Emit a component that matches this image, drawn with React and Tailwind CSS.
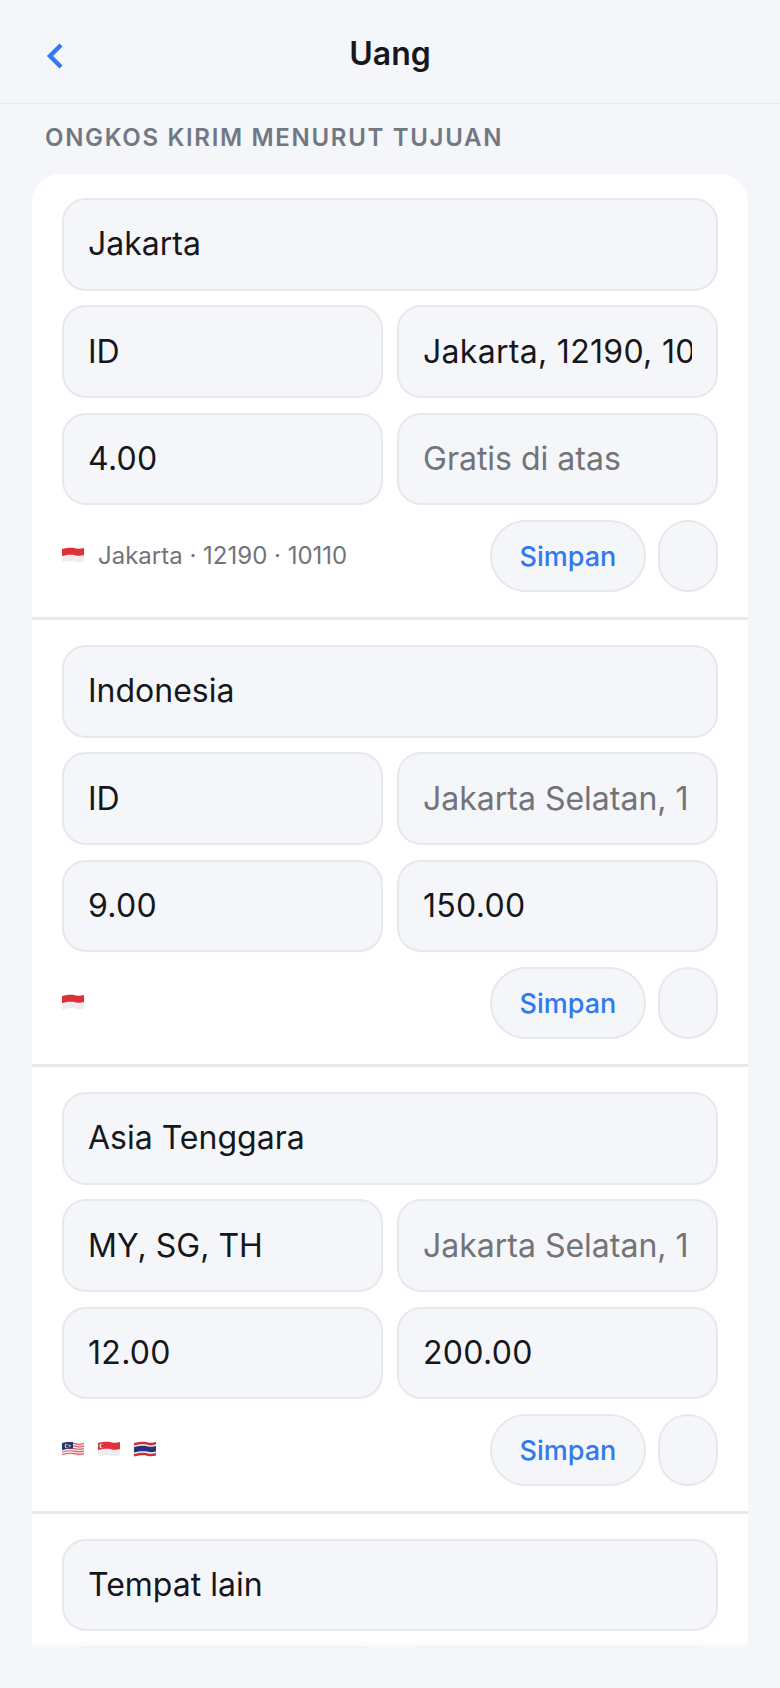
const rows = [
  { name: 'Jakarta', codes: 'ID', area: 'Jakarta, 12190, 10110', areaPh: false, areaNum: true, rate: '4.00', free: 'Gratis di atas', freePh: true, flags: ['id'], note: 'Jakarta · 12190 · 10110' },
  { name: 'Indonesia', codes: 'ID', area: 'Jakarta Selatan, 1', areaPh: true, rate: '9.00', free: '150.00', freePh: false, freeNum: true, flags: ['id'], note: '' },
  { name: 'Asia Tenggara', codes: 'MY, SG, TH', area: 'Jakarta Selatan, 1', areaPh: true, rate: '12.00', free: '200.00', freePh: false, freeNum: true, flags: ['my', 'sg', 'th'], note: '' },
];

const midEdge = 'C19 9 16 9 13 8.2 C10 7.5 6 7.5 0 9 Z';

function Flag({ code }) {
  const wave = 'M0 2 C6 .5 10 .5 13 1.2 C16 2 19 2 22 1 V14.5 C19 15.5 16 15.5 13 14.7 C10 14 6 14 0 15.5 Z';
  const id = `clip-${code}`;
  return (
    <svg width="22" height="17" viewBox="0 0 22 17" className="shrink-0">
      <defs>
        <clipPath id={id}>
          <path d={wave} />
        </clipPath>
      </defs>
      <g clipPath={`url(#${id})`}>
        {code === 'id' && (
          <>
            <rect width="22" height="17" fill="#ededed" />
            <path d={`M0 0 H22 V8 ${midEdge}`} fill="#de3038" />
          </>
        )}
        {code === 'sg' && (
          <>
            <rect width="22" height="17" fill="#ededed" />
            <path d={`M0 0 H22 V8 ${midEdge}`} fill="#e0313c" />
            <circle cx="3.8" cy="5" r="2.3" fill="#fff" />
            <circle cx="4.8" cy="5" r="2.1" fill="#e0313c" />
          </>
        )}
        {code === 'th' && (
          <>
            <rect width="22" height="17" fill="#f3f3f3" />
            <path d="M0 0 H22 V3.6 C19 4.6 16 4.6 13 3.8 C10 3.1 6 3.1 0 4.6 Z" fill="#c8313c" />
            <path d="M0 6 C6 4.5 10 4.5 13 5.2 C16 6 19 6 22 5 V10.4 C19 11.4 16 11.4 13 10.6 C10 9.9 6 9.9 0 11.4 Z" fill="#27327e" />
            <path d="M0 13 C6 11.5 10 11.5 13 12.2 C16 13 19 13 22 12 V17 H0 Z" fill="#c8313c" />
          </>
        )}
        {code === 'my' && (
          <>
            <rect width="22" height="17" fill="#f6eeee" />
            <path d="M0 3.5 C6 2 10 2 13 2.7 C16 3.5 19 3.5 22 2.5" fill="none" stroke="#dc6068" strokeWidth="1.2" />
            <path d="M0 6 C6 4.5 10 4.5 13 5.2 C16 6 19 6 22 5" fill="none" stroke="#dc6068" strokeWidth="1.2" />
            <path d="M0 8.5 C6 7 10 7 13 7.7 C16 8.5 19 8.5 22 7.5" fill="none" stroke="#dc6068" strokeWidth="1.2" />
            <path d="M0 11 C6 9.5 10 9.5 13 10.2 C16 11 19 11 22 10" fill="none" stroke="#dc6068" strokeWidth="1.2" />
            <path d="M0 13.5 C6 12 10 12 13 12.7 C16 13.5 19 13.5 22 12.5" fill="none" stroke="#dc6068" strokeWidth="1.2" />
            <path d="M0 1 H11 V7.8 C7 7.4 4 7.8 0 9 Z" fill="#27327e" />
            <circle cx="4.8" cy="5" r="2.2" fill="#f5c83a" />
            <circle cx="5.7" cy="5" r="1.8" fill="#27327e" />
            <circle cx="7.6" cy="4.8" r="1.1" fill="#f5c83a" />
          </>
        )}
      </g>
    </svg>
  );
}

function Field({ children, placeholder, numeric }) {
  return (
    <div className="min-w-0 h-[92.67px] rounded-[24px] border-2 border-[#e6e8ee] bg-[#f4f6fa] px-[24px] flex items-center">
      <div className={`w-full overflow-hidden whitespace-nowrap text-[32px] leading-[40px] ${numeric ? 'tracking-[0.3px]' : ''} ${placeholder ? 'text-[#737378]' : 'text-[#16171b]'}`}>
        {children}
      </div>
    </div>
  );
}

function Row({ row, first }) {
  return (
    <div className={`px-[30px] pb-[25px] flex flex-col gap-[14.67px] border-b-[3px] border-[#e6e8ec] ${first ? 'pt-[24px]' : 'pt-[25px]'}`}>
      <Field>{row.name}</Field>
      <div className="grid grid-cols-2 gap-[14px]">
        <Field>{row.codes}</Field>
        <Field placeholder={row.areaPh} numeric={row.areaNum}>{row.area}</Field>
      </div>
      <div className="grid grid-cols-2 gap-[14px]">
        <Field numeric>{row.rate}</Field>
        <Field placeholder={row.freePh} numeric={row.freeNum}>{row.free}</Field>
      </div>
      <div className="flex items-center justify-between">
        <div className="flex items-center gap-[14px]">
          <div className="flex items-center gap-[14px]">
            {row.flags.map((f) => (
              <Flag key={f} code={f} />
            ))}
          </div>
          {row.note && <span className="text-[24px] leading-[30px] text-[#737379]">{row.note}</span>}
        </div>
        <div className="flex items-center gap-[12px]">
          <div className="w-[156px] h-[72px] pt-[2px] rounded-full border-2 border-[#e6e8ee] bg-[#f4f6fa] flex items-center justify-center text-[27px] font-medium text-[#3079ee]">
            Simpan
          </div>
          <div className="w-[60px] h-[72px] rounded-full border-2 border-[#e6e8ee] bg-[#f4f6fa]" />
        </div>
      </div>
    </div>
  );
}

export default function App() {
  return (
    <div className="w-[780px] h-[1688px] bg-[#f4f6fa] overflow-hidden flex flex-col font-['Inter',sans-serif]">
      <header className="relative h-[104px] shrink-0 border-b border-[#e6e8ed] flex items-center justify-center">
        <svg className="absolute left-[44px] top-[42px]" width="22" height="28" viewBox="0 0 22 28" fill="none">
          <path d="M17 3 L6 14 L17 25" stroke="#3079ee" strokeWidth="4.4" strokeLinecap="butt" strokeLinejoin="miter" />
        </svg>
        <h1 className="text-[32px] leading-[40px] font-semibold text-[#16171b] mt-[4px]">Uang</h1>
      </header>
      <div className="px-[45px] pt-[19px] pb-[21px] text-[24px] leading-[30px] font-semibold tracking-[1.68px] text-[#727883]">
        ONGKOS KIRIM MENURUT TUJUAN
      </div>
      <div className="relative mx-[32px] h-[1476px] overflow-hidden rounded-t-[28px] bg-white">
        {rows.map((r, i) => (
          <Row key={r.name} row={r} first={i === 0} />
        ))}
        <Row row={{ name: 'Tempat lain', codes: '', area: '', areaPh: true, rate: '', free: '', freePh: false, flags: [], note: '' }} />
        <div className="absolute left-0 right-0 bottom-0 h-[10px] bg-gradient-to-b from-white/0 to-[#f4f6fa]" />
      </div>
    </div>
  );
}
